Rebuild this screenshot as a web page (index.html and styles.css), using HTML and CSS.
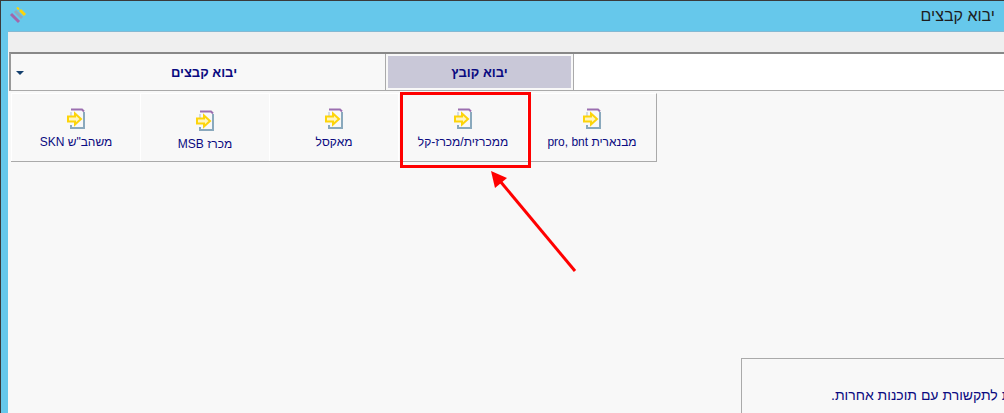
FILE: index.html
```html
<!DOCTYPE html>
<html lang="he" dir="rtl">
	<head>
		<meta charset="UTF-8" />
		<title>יבוא קבצים</title>
		<link rel="stylesheet" href="styles.css">
	</head>
	<body>
		<svg width="0" height="0" class="defs">
			<symbol id="import" viewBox="0 0 20 22">
				<path d="M4 1.500h11l2 2" fill="none" stroke="#9b6fb0" stroke-width="2" />
				<path d="M17 4v16H4v-3" fill="none" stroke="#8aa9bd" stroke-width="2" />
				<path d="M4 9V4" fill="none" stroke="#c4d2dc" stroke-width="1.500" />
				<path d="M1 8.500h7V5.500l6 5.500-6 5.500v-3H1z" fill="#fff6c0" stroke="#fdd40a" stroke-width="2" />
			</symbol>
		</svg>
		<div class="window">
			<header class="titlebar">
				<span class="title">יבוא קבצים</span>
				<svg class="logo" width="18" height="18" viewBox="0 0 18 18">
					<path d="M2 7l8 8" stroke="#a267ab" stroke-width="3" />
					<path d="M6 4l7 7" stroke="#8fa9bd" stroke-width="3" />
					<path d="M11 3l5 5" stroke="#fdd40a" stroke-width="3" />
					<path d="M8 0.500l2 2" stroke="#fdd40a" stroke-width="2" />
				</svg>
			</header>
			<main class="content">
				<div class="toolbar"></div>
				<div class="tabs">
					<div class="tab-rest"></div>
					<div class="tab active"><span>יבוא קובץ</span></div>
					<div class="tab group">
						<span>יבוא קבצים</span>
						<i class="caret"></i>
					</div>
				</div>
				<div class="actions">
					<div class="action">
						<svg class="icon"><use href="#import" /></svg>
						<span>מבנארית pro, bnt</span>
					</div>
					<div class="action">
						<svg class="icon"><use href="#import" /></svg>
						<span>ממכרזית/מכרז-קל</span>
					</div>
					<div class="action">
						<svg class="icon"><use href="#import" /></svg>
						<span>מאקסל</span>
					</div>
					<div class="action low">
						<svg class="icon"><use href="#import" /></svg>
						<span>מכרז MSB</span>
					</div>
					<div class="action">
						<svg class="icon"><use href="#import" /></svg>
						<span>משהב"ש SKN</span>
					</div>
				</div>
				<div class="note">
					<p>אפשרות לתקשורת עם תוכנות אחרות.</p>
				</div>
			</main>
		</div>
		<!-- הסימון האדום מעל המסך -->
		<div class="mark"></div>
		<svg class="arrow" width="100" height="110" viewBox="0 0 100 110">
			<path d="M89 105L14 15" stroke="#f00" stroke-width="3" />
			<path d="M5 5l4 17 12-10z" fill="#f00" />
		</svg>
	</body>
</html>
```

FILE: styles.css
```css
html,
body {
	height: 100%;
	margin: 0;
	overflow: hidden;
	font-family: "Liberation Sans", Arial, sans-serif;
}

.defs {
	display: block;
	height: 0;
}

.window {
	height: 100%;
	box-sizing: border-box;
	display: flex;
	flex-direction: column;
	border-top: 1px solid #3a3a3a;
	border-left: 1px solid #3a3a3a;
	background-color: #66c8eb;
}

.titlebar {
	height: 30px;
	flex: none;
	display: flex;
	justify-content: space-between;
	align-items: center;
	padding: 0 9px 0 8px;
	box-sizing: border-box;
}

.title {
	font-size: 16px;
	color: #1d1d1d;
}

.content {
	flex: 1;
	min-height: 0;
	margin-left: 7px;
	background-color: #f8f8f8;
	border-top: 1px solid #84b9d3;
}

.toolbar {
	height: 20px;
	background-color: #efefef;
}

.tabs {
	height: 39px;
	box-sizing: border-box;
	display: flex;
	margin-left: 1px;
	border-top: 2px solid #888;
	border-left: 2px solid #999;
	border-bottom: 1px solid #aaa;
	font-size: 13px;
	font-weight: bold;
	color: #0a0a80;
}

.tab-rest {
	flex: 1;
	background-color: #fff;
}

.tab {
	display: flex;
	align-items: center;
	justify-content: center;
	background-color: #f8f8f8;
}

.tab.active {
	width: 189px;
	box-sizing: border-box;
	border-right: 1px solid #aaa;
	border-left: 1px solid #aaa;
	padding: 2px;
}

.tab.active span {
	flex: 1;
	align-self: stretch;
	display: flex;
	align-items: center;
	justify-content: center;
	background-color: #c9c8d8;
}

.tab.group {
	width: 374px;
	position: relative;
	padding-left: 12px;
	box-sizing: border-box;
}

.caret {
	position: absolute;
	left: 5px;
	top: 17px;
	border-top: 4px solid #14406e;
	border-left: 4px solid transparent;
	border-right: 4px solid transparent;
}

.actions {
	width: 646px;
	height: 69px;
	box-sizing: border-box;
	margin: 2px auto 0 3px;
	display: flex;
	border-top: 1px solid #fff;
	border-bottom: 1px solid #aaa;
	border-right: 1px solid #aaa;
}

.action {
	flex: 1;
	display: flex;
	flex-direction: column;
	align-items: center;
	padding-top: 14px;
	gap: 5px;
	border-left: 1px solid #fff;
	font-size: 12px;
	color: #0a0a80;
}

.action.low {
	padding-top: 16px;
}

.icon {
	width: 20px;
	height: 22px;
	margin-left: 1px;
}

.note {
	margin: 196px -300px 0 0;
	width: 563px;
	height: 55px;
	box-sizing: border-box;
	border-top: 1px solid #aaa;
	border-left: 1px solid #aaa;
	display: flex;
	justify-content: flex-end;
	padding-left: 89px;
	font-size: 14px;
	color: #0a0a80;
}

.note p {
	margin: 28px 0 0;
	white-space: nowrap;
}

.mark {
	position: absolute;
	left: 400px;
	top: 92px;
	width: 125px;
	height: 70px;
	border: 3px solid #f00;
}

.arrow {
	position: absolute;
	left: 486px;
	top: 166px;
}
```
